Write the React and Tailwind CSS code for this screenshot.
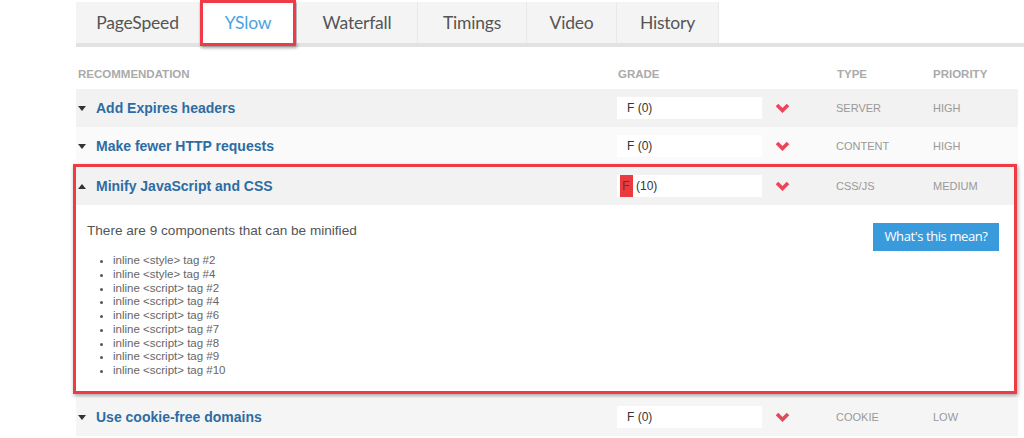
import React from "react";

const tabs = [
  { name: "PageSpeed", w: "w-[124px]" },
  { name: "YSlow", w: "w-[97px]", active: true },
  { name: "Waterfall", w: "w-[121px]" },
  { name: "Timings", w: "w-[109px]" },
  { name: "Video", w: "w-[90px]" },
  { name: "History", w: "w-[102px]" },
];

const items = [
  "inline <style> tag #2",
  "inline <style> tag #4",
  "inline <script> tag #2",
  "inline <script> tag #4",
  "inline <script> tag #6",
  "inline <script> tag #7",
  "inline <script> tag #8",
  "inline <script> tag #9",
  "inline <script> tag #10",
];

function Chevron() {
  return (
    <svg width="15" height="10" viewBox="0 0 15 10" className="block">
      <polyline points="2,2 7.5,7.5 13,2" fill="none" stroke="#e8475a" strokeWidth="3.6" strokeLinecap="butt" strokeLinejoin="miter" />
    </svg>
  );
}

function Tri({ up }) {
  return (
    <svg width="8" height="5" viewBox="0 0 8 5" className="block">
      {up ? <polygon points="0,5 8,5 4,0" fill="#333" /> : <polygon points="0,0 8,0 4,5" fill="#333" />}
    </svg>
  );
}

function Row({ title, grade, type, priority, bg, up, red }) {
  return (
    <div className={`flex h-[38px] items-center ${bg}`}>
      <div className="flex w-[541px] items-center pl-[2px]">
        <div className="w-[18px]"><Tri up={up} /></div>
        <span className="text-[14px] font-bold text-[#2d6ca3]">{title}</span>
      </div>
      <div className="flex w-[219px] items-center">
        <div className="flex h-[22px] w-[145px] items-center bg-white text-[12px] text-[#333]">
          {red ? (
            <>
              <span className="ml-[3px] flex h-[22px] w-[13px] items-center bg-[#ea3a40] pl-[2px] text-[#444]">F</span>
              <span className="ml-[3px]">(10)</span>
            </>
          ) : (
            <span className="ml-[10px]">{grade}</span>
          )}
        </div>
        <div className="ml-[13px]"><Chevron /></div>
      </div>
      <div className="w-[97px] text-[11px] uppercase text-[#999]">{type}</div>
      <div className="text-[11px] uppercase text-[#999]">{priority}</div>
    </div>
  );
}

export default function App() {
  return (
    <div className="h-[438px] w-[1024px] overflow-hidden bg-white" style={{ fontFamily: "Arial, 'Liberation Sans', sans-serif" }}>
      {/* Tabs */}
      <div className="pl-[76px] pt-[2px]">
        <div className="flex h-[41px]" style={{ fontFamily: "Lato, 'Open Sans', sans-serif" }}>
          {tabs.map((t) => (
            <div
              key={t.name}
              className={`relative flex items-center justify-center border-r border-[#e9e9e9] pt-[2px] text-[17.5px] tracking-[-0.2px] ${t.w} ${t.active ? "bg-white text-[#4aa3df]" : "bg-[#f4f4f4] text-[#555]"}`}
            >
              {t.name}
              {t.active && (
                <span className="absolute -bottom-[3px] -top-[2px] left-0 right-0 border-[3px] border-[#ee3b45] shadow-[1px_2px_3px_rgba(0,0,0,0.35)]" />
              )}
            </div>
          ))}
        </div>
        <div className="h-[4px] bg-[#e2e2e2]" />
      </div>

      {/* Table */}
      <div className="ml-[76px] w-[942px]">
        <div className="flex h-[42px] items-center pt-[14px] text-[11.5px] font-bold text-[#aaa]">
          <div className="w-[541px] pl-[2px]">RECOMMENDATION</div>
          <div className="w-[220px] pl-[1px]">GRADE</div>
          <div className="w-[96px]">TYPE</div>
          <div>PRIORITY</div>
        </div>
        <Row title="Add Expires headers" grade="F (0)" type="SERVER" priority="HIGH" bg="bg-[#f2f2f2]" />
        <Row title="Make fewer HTTP requests" grade="F (0)" type="CONTENT" priority="HIGH" bg="bg-[#fafafa]" />

        <div className="-ml-[3px] mt-[-1px] w-[944px] border-[3px] border-[#ef3c44] shadow-[1px_2px_4px_rgba(0,0,0,0.35)]">
          <Row title="Minify JavaScript and CSS" type="CSS/JS" priority="MEDIUM" bg="bg-[#f2f2f2]" up red />
          <div className="flex h-[186px] justify-between bg-white pl-[11px] pr-[15px] pt-[18px]">
            <div>
              <p className="text-[13.6px] leading-[16px] text-[#555]">There are 9 components that can be minified</p>
              <ul className="mt-[15px] list-disc pl-[26px] text-[11.5px] leading-[13.75px] text-[#666] marker:text-[#555]">
                {items.map((it) => (
                  <li key={it}>{it}</li>
                ))}
              </ul>
            </div>
            <button
              className="flex h-[28px] w-[126px] items-center justify-center bg-[#3a9bdc] text-[13px] tracking-[-0.4px] text-white"
              style={{ fontFamily: "'Open Sans', sans-serif" }}
            >
              What's this mean?
            </button>
          </div>
        </div>

        <div className="mt-[4px]">
          <Row title="Use cookie-free domains" grade="F (0)" type="COOKIE" priority="LOW" bg="bg-[#f5f5f5]" />
        </div>
      </div>
    </div>
  );
}
